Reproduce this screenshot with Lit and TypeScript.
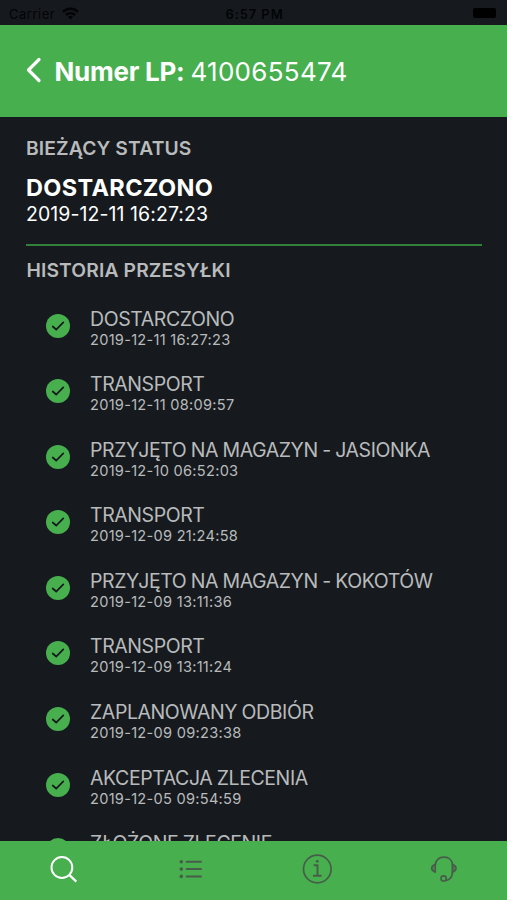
import { LitElement, html, css, svg } from "lit";
import { customElement } from "lit/decorators.js";

interface Entry {
  name: string;
  date: string;
}

const HISTORY: Entry[] = [
  { name: "DOSTARCZONO", date: "2019-12-11 16:27:23" },
  { name: "TRANSPORT", date: "2019-12-11 08:09:57" },
  { name: "PRZYJĘTO NA MAGAZYN - JASIONKA", date: "2019-12-10 06:52:03" },
  { name: "TRANSPORT", date: "2019-12-09 21:24:58" },
  { name: "PRZYJĘTO NA MAGAZYN - KOKOTÓW", date: "2019-12-09 13:11:36" },
  { name: "TRANSPORT", date: "2019-12-09 13:11:24" },
  { name: "ZAPLANOWANY ODBIÓR", date: "2019-12-09 09:23:38" },
  { name: "AKCEPTACJA ZLECENIA", date: "2019-12-05 09:54:59" },
  { name: "ZŁOŻONE ZLECENIE", date: "" },
];

const TABS = [
  {
    label: "Szukaj",
    active: true,
    art: svg`<circle cx="13.9" cy="12.5" r="10.4" stroke-width="2"/><path d="M21.3 19.9 28.3 26.6" stroke-width="2.2"/>`,
  },
  {
    label: "Lista",
    active: false,
    art: svg`<path d="M11.6 6.8H26M11.6 14.1H26M11.6 21.4H26" stroke-width="2" stroke-linecap="round"/><path d="M6.3 6.8h.01M6.3 14.1h.01M6.3 21.4h.01" stroke-width="3.6" stroke-linecap="round"/>`,
  },
  {
    label: "Informacje",
    active: false,
    art: svg`<circle cx="15.3" cy="14" r="13.8" stroke-width="1.7"/><path d="M11.7 10.3H15.5V20.6M11 20.8H19.6" stroke-width="1.9"/><circle cx="15.3" cy="6.3" r="1.4" fill="currentColor" stroke="none"/>`,
  },
  {
    label: "Kontakt",
    active: false,
    art: svg`<path d="M6.3 10.2C6.3 5.2 9.9 2.1 14.9 2.1s8.6 3.1 8.6 8.1v5.8c0 5.2-2.2 9-6.7 9.7" stroke-width="1.7"/><path d="M6.3 9.5v7.8C4 16.4 2.6 15 2.6 13.3s1.4-3 3.7-3.800zM23.5 9.5v7.8c2.3-.9 3.6-2.3 3.6-4s-1.3-3-3.6-3.8z" stroke-width="1.5" fill="currentColor" fill-opacity=".5" stroke-linejoin="round"/><circle cx="14.6" cy="23.4" r="2.6" stroke-width="1.7"/>`,
  },
];

@customElement("history-row")
export class HistoryRow extends LitElement {
  static properties = { name: {}, date: {} };
  declare name: string;
  declare date: string;

  static styles = css`
    :host {
      display: flex;
      align-items: flex-start;
      height: 65.55px;
      flex: none;
      padding-left: 45.5px;
      color: #b9babc;
      white-space: nowrap;
    }
    .check {
      width: 24px;
      height: 24px;
      margin: 7px 20.5px 0 0;
      flex: none;
    }
    .name {
      font-size: 19.5px;
      line-height: 24px;
      letter-spacing: -0.42px;
      word-spacing: -0.6px;
    }
    .date {
      font-size: 14.6px;
      line-height: 18px;
      letter-spacing: 0.27px;
    }
  `;

  render() {
    return html`
      <svg class="check" viewBox="0 0 24 24" fill="none">
        <circle cx="12" cy="12" r="12" fill="#47af4e" />
        <path d="M6.7 12.5 10.2 15.5 17.3 8.4" stroke="#15181d" stroke-width="1.7" stroke-linecap="round" />
      </svg>
      <div>
        <div class="name">${this.name}</div>
        <div class="date">${this.date}</div>
      </div>
    `;
  }
}

@customElement("app-root")
export class AppRoot extends LitElement {
  static styles = css`
    :host {
      display: flex;
      flex-direction: column;
      height: 900px;
      width: 507px;
      overflow: hidden;
      background: #161a1e;
      font-family: Inter, "Liberation Sans", sans-serif;
      white-space: nowrap;
    }
    .status {
      display: grid;
      grid-template-columns: 1fr auto 1fr;
      align-items: center;
      height: 25px;
      flex: none;
      padding: 2px 11px 0 9px;
      box-sizing: border-box;
      font-size: 13px;
      color: #030405;
    }
    .carrier {
      display: flex;
      align-items: center;
      gap: 7px;
      letter-spacing: 0.5px;
    }
    .wifi {
      width: 17px;
      height: 13px;
    }
    .time {
      margin-left: 4px;
      font-weight: 600;
      letter-spacing: 0.9px;
    }
    .battery {
      justify-self: end;
      width: 23px;
      height: 10px;
      margin-top: -1px;
      border-radius: 2px;
      background: #000;
    }
    header {
      display: flex;
      align-items: center;
      height: 92px;
      flex: none;
      padding-left: 26px;
      box-sizing: border-box;
      background: #47af4e;
      color: #fff;
      font-size: 26px;
    }
    .back {
      width: 16px;
      height: 26px;
      margin: -3px 12.5px 0 0;
    }
    .title {
      font-weight: 700;
      letter-spacing: -0.25px;
    }
    .number {
      margin-left: 6px;
      letter-spacing: 0.3px;
    }
    main {
      display: flex;
      flex-direction: column;
      flex: 1;
      min-height: 0;
      overflow: hidden;
    }
    .current {
      margin: 0 25px 0 26px;
      padding-top: 19px;
      height: 129px;
      box-sizing: border-box;
      border-bottom: 2px solid #328039;
      color: #fff;
      flex: none;
    }
    .heading {
      font-size: 19.3px;
      line-height: 24px;
      font-weight: 600;
      letter-spacing: 0.12px;
      color: #b9babc;
    }
    .state {
      margin-top: 13.5px;
      font-size: 23.5px;
      line-height: 28px;
      font-weight: 700;
      letter-spacing: 0.35px;
    }
    .when {
      font-size: 19.5px;
      line-height: 24px;
      letter-spacing: 0.07px;
    }
    .history {
      margin: 12px 0 24.7px 26.5px;
    }
    nav {
      display: grid;
      grid-template-columns: repeat(4, 1fr);
      place-items: center;
      height: 59px;
      flex: none;
      padding-bottom: 3px;
      box-sizing: border-box;
      background: #47af4e;
      color: #485c4b;
    }
    .tab {
      width: 30px;
      height: 28px;
      overflow: visible;
    }
    .tab.active {
      color: #fff;
    }
  `;

  render() {
    return html`
      <div class="status">
        <div class="carrier">
          <span>Carrier</span>
          <svg class="wifi" viewBox="0 0 17 13" fill="none" stroke="currentColor" stroke-width="2.5">
            <path d="M1 4.9C5.3.8 11.7.8 16 4.9M3.9 8C6.6 5.5 10.4 5.5 13.1 8" />
            <path d="M8.5 12.5 5.9 9.8C7.4 8.5 9.6 8.5 11.1 9.8Z" fill="currentColor" stroke="none" />
          </svg>
        </div>
        <span class="time">6:57 PM</span>
        <span class="battery"></span>
      </div>
      <header>
        <svg class="back" viewBox="0 0 16 26" fill="none" stroke="currentColor" stroke-width="3.2" stroke-linecap="round" stroke-linejoin="round">
          <path d="M13 2.5 2.5 13 13 23.5" />
        </svg>
        <span class="title">Numer LP:</span>
        <span class="number">4100655474</span>
      </header>
      <main>
        <section class="current">
          <div class="heading">BIEŻĄCY STATUS</div>
          <div class="state">DOSTARCZONO</div>
          <div class="when">2019-12-11 16:27:23</div>
        </section>
        <div class="heading history">HISTORIA PRZESYŁKI</div>
        ${HISTORY.map((e) => html`<history-row .name=${e.name} .date=${e.date}></history-row>`)}
      </main>
      <nav>
        ${TABS.map(
          (t) => html`<svg class="tab ${t.active ? "active" : ""}" aria-label=${t.label} viewBox="0 0 30 28" fill="none" stroke="currentColor">${t.art}</svg>`,
        )}
      </nav>
    `;
  }
}
